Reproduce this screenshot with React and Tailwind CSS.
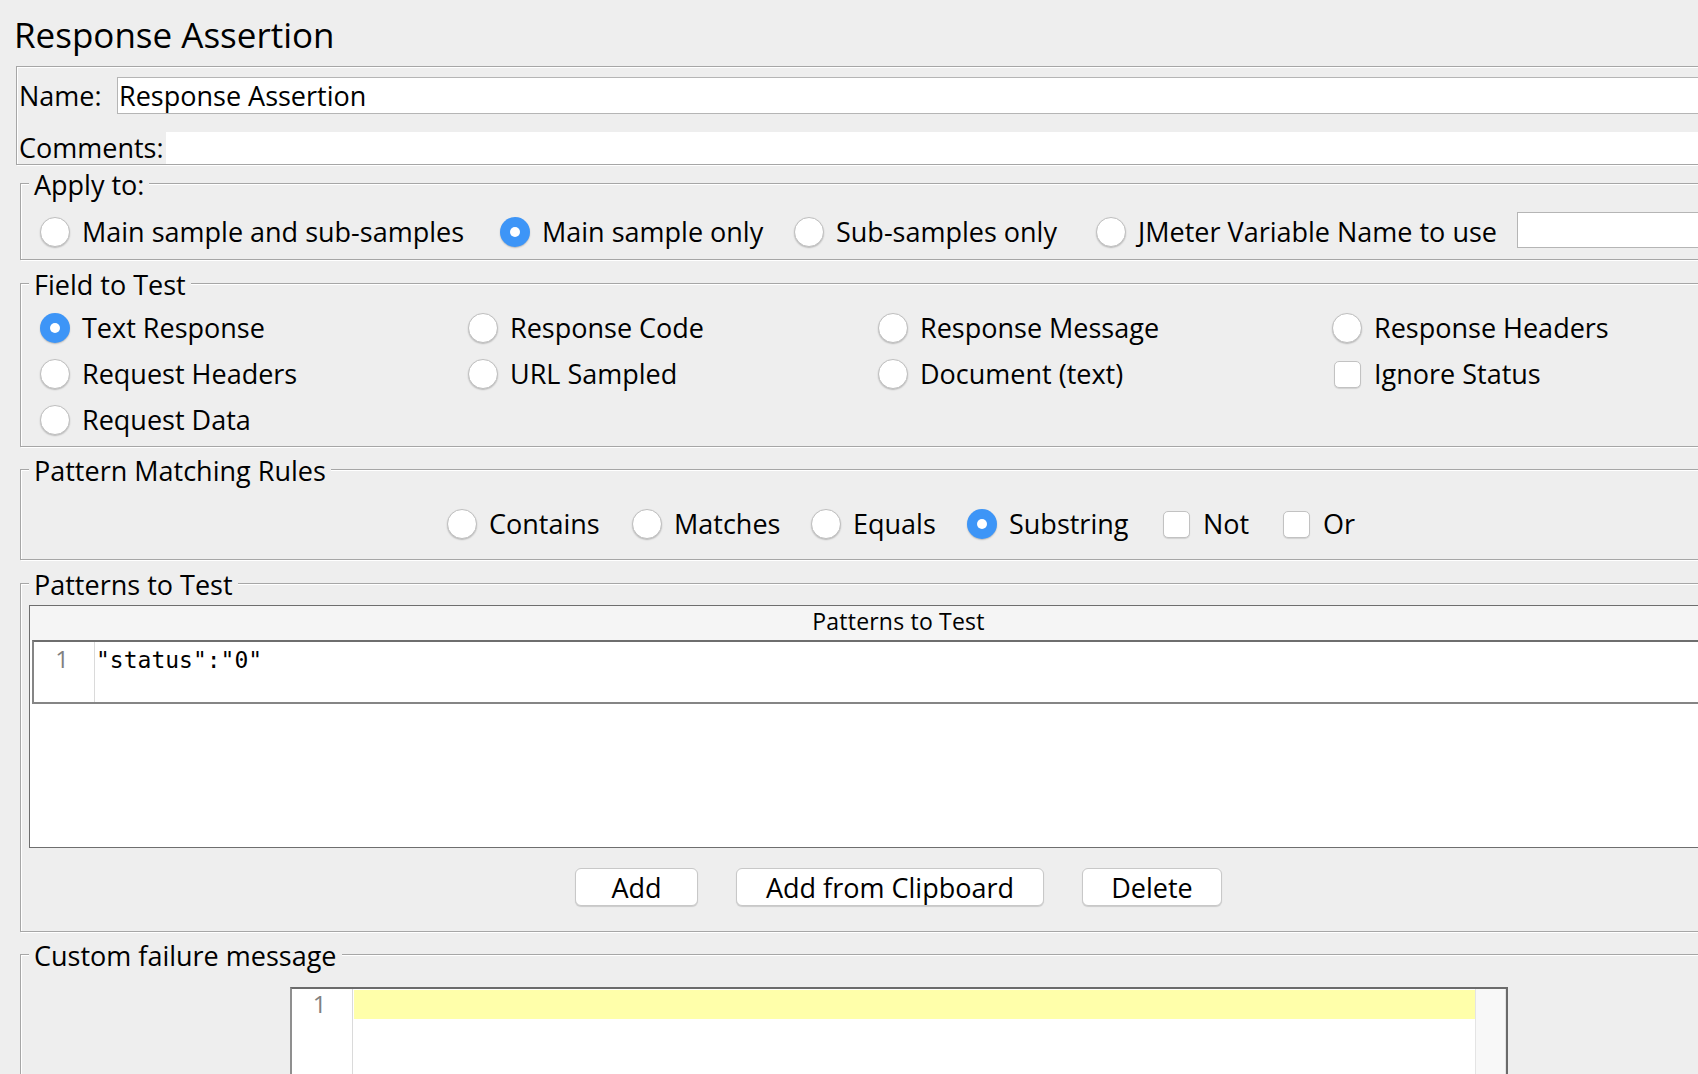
import React from 'react';

// Aqua-style radio button
const Radio = ({ checked }) => (
  <span
    className={`w-[30px] h-[30px] rounded-full shrink-0 flex items-center justify-center shadow-[0_1px_1.5px_rgba(0,0,0,0.22)] ${
      checked ? 'bg-[#3d95f7]' : 'bg-white border border-[#bfbfbf]'
    }`}
  >
    {checked && <span className="w-[10px] h-[10px] rounded-full bg-white" />}
  </span>
);

const Checkbox = () => (
  <span className="w-[30px] h-[30px] shrink-0 flex items-center justify-center">
    <span className="w-[27px] h-[27px] rounded-[5px] bg-white border border-[#c2c2c2] shadow-[0_1px_1px_rgba(0,0,0,0.12)]" />
  </span>
);

const Option = ({ type = 'radio', checked = false, label, className = '' }) => (
  <label className={`flex items-center gap-[12px] h-[30px] shrink-0 ${className}`}>
    {type === 'radio' ? <Radio checked={checked} /> : <Checkbox />}
    <span className="leading-[30px] whitespace-nowrap">{label}</span>
  </label>
);

// Etched titled border, like Swing's TitledBorder
const Group = ({ title, className = '', children }) => (
  <fieldset
    className={`mx-[20px] border border-[#a6a6a6] shadow-[inset_1px_1px_0_#fff,1px_1px_0_#fff] ${className}`}
  >
    <legend className="ml-[8px] px-[5px] pt-[4px] leading-[28px] bg-[#eeeeee]">{title}</legend>
    {children}
  </fieldset>
);

const Gutter = ({ className = '' }) => (
  <div
    className={`w-[61px] shrink-0 border-r border-[#dadada] text-right pr-[25px] text-[24px] text-[#808080] ${className}`}
  >
    1
  </div>
);

export default function App() {
  return (
    <div className="w-[1698px] h-[1074px] overflow-hidden bg-[#eeeeee] text-black text-[27px] font-['Open_Sans',sans-serif]">
      <div className="w-[1797px]">
        {/* Title */}
        <div className="h-[66px] pt-[17px] pl-[14px] text-[35px] leading-[35px]">Response Assertion</div>

        {/* Name / Comments */}
        <div className="mx-[16px] border border-[#a6a6a6] shadow-[inset_1px_1px_0_#fff,1px_1px_0_#fff] pl-[2px]">
          <div className="flex items-center mt-[10px] h-[37px]">
            <span className="w-[98px] shrink-0 leading-[37px]">Name:</span>
            <div className="flex-1 h-[37px] bg-white border border-[#b5b5b5] pl-[1px] leading-[35px]">
              Response Assertion
            </div>
          </div>
          <div className="flex items-center mt-[18px] h-[32px]">
            <span className="shrink-0 leading-[32px] pr-[2px]">Comments:</span>
            <div className="flex-1 h-[32px] bg-white" />
          </div>
        </div>

        {/* Apply to */}
        <Group title="Apply to:" className="mt-[2px]">
          <div className="flex items-center h-[30px] mt-[18px] mb-[12px] pl-[19px]">
            <Option label="Main sample and sub-samples" className="w-[460px]" />
            <Option label="Main sample only" checked className="w-[294px]" />
            <Option label="Sub-samples only" className="w-[302px]" />
            <Option label="JMeter Variable Name to use" className="w-[421px]" />
            <div className="w-[250px] h-[36px] mb-[4px] bg-white border border-[#b5b5b5]" />
          </div>
        </Group>

        {/* Field to Test */}
        <Group title="Field to Test" className="mt-[7px]">
          <div className="grid grid-cols-[428px_410px_454px_1fr] gap-y-[16px] pt-[14px] pb-[11px] pl-[19px]">
            <Option label="Text Response" checked />
            <Option label="Response Code" />
            <Option label="Response Message" />
            <Option label="Response Headers" />
            <Option label="Request Headers" />
            <Option label="URL Sampled" />
            <Option label="Document (text)" />
            <Option type="checkbox" label="Ignore Status" />
            <Option label="Request Data" />
          </div>
        </Group>

        {/* Pattern Matching Rules */}
        <Group title="Pattern Matching Rules" className="mt-[6px]">
          <div className="flex justify-center pt-[24px] pb-[20px] pl-[5px]">
            <Option label="Contains" className="w-[185px]" />
            <Option label="Matches" className="w-[179px]" />
            <Option label="Equals" className="w-[156px]" />
            <Option label="Substring" checked className="w-[194px]" />
            <Option type="checkbox" label="Not" className="w-[120px]" />
            <Option type="checkbox" label="Or" className="w-[74px]" />
          </div>
        </Group>

        {/* Patterns to Test */}
        <Group title="Patterns to Test" className="mt-[7px]">
          <div className="px-[8px] pt-[6px]">
            <div className="h-[243px] border border-[#6e6e6e] bg-white">
              <div className="h-[34px] bg-[#f5f5f5] text-center text-[23px] leading-[30px] tracking-[0.2px]">
                Patterns to Test
              </div>
              <div className="mx-[2px] h-[64px] flex border-2 border-[#858585] border-t-[#6e6e6e]">
                <Gutter className="pt-[3px] leading-[28px]" />
                <div className="pl-[1px] pt-[4px] leading-[28px] text-[23px] font-['DejaVu_Sans_Mono',monospace]">
                  "status":"0"
                </div>
              </div>
            </div>
          </div>
          <div className="flex justify-center gap-[38px] mt-[20px] mb-[25px]">
            <button className="w-[123px] h-[38px] leading-[33px] bg-white border border-[#c8c8c8] rounded-[6px] shadow-[0_1px_1px_rgba(0,0,0,0.15)]">
              Add
            </button>
            <button className="w-[308px] h-[38px] leading-[33px] bg-white border border-[#c8c8c8] rounded-[6px] shadow-[0_1px_1px_rgba(0,0,0,0.15)]">
              Add from Clipboard
            </button>
            <button className="w-[140px] h-[38px] leading-[33px] bg-white border border-[#c8c8c8] rounded-[6px] shadow-[0_1px_1px_rgba(0,0,0,0.15)]">
              Delete
            </button>
          </div>
        </Group>

        {/* Custom failure message */}
        <Group title="Custom failure message" className="mt-[6px]">
          <div className="mt-[17px] mx-auto w-[1218px] h-[140px] flex bg-white border-2 border-[#6b6b6b] border-l-[#8f8f8f]">
            <Gutter className="pt-[0px] leading-[29px]" />
            <div className="flex-1 pt-[1px]">
              <div className="h-[29px] ml-[1px] bg-[#ffffaa]" />
            </div>
            <div className="w-[31px] shrink-0 bg-[#f8f8f8] border-l border-r border-[#e4e4e4]" />
          </div>
        </Group>
      </div>
    </div>
  );
}
